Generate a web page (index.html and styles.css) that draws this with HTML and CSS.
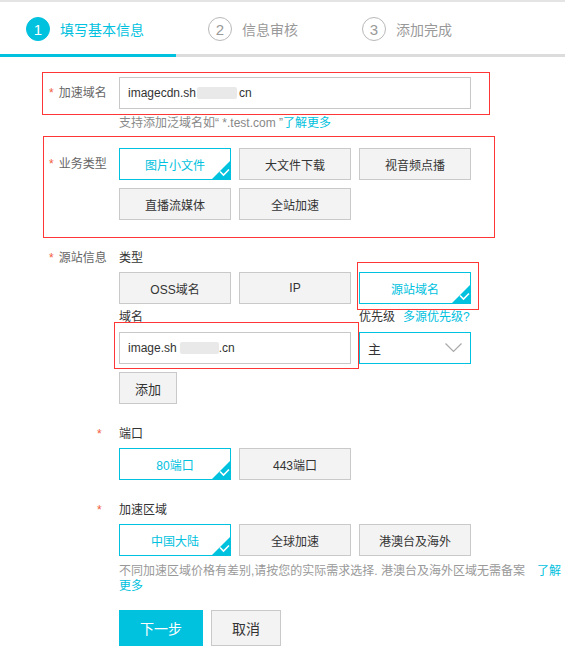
FILE: index.html
```html
<!DOCTYPE html>
<html lang="zh-CN">
<head>
<meta charset="utf-8">
<title>填写基本信息</title>
<link rel="stylesheet" href="styles.css">
</head>
<body>
<div class="page">
  <div class="steps">
    <div class="step active"><span class="num">1</span><span>填写基本信息</span></div>
    <div class="step"><span class="num">2</span><span>信息审核</span></div>
    <div class="step"><span class="num">3</span><span>添加完成</span></div>
  </div>
  <div class="progress"><div class="done"></div><div class="rest"></div></div>

  <div class="form">
    <div class="field">
      <div class="label"><span class="req">*</span>加速域名</div>
      <div class="content">
        <div class="input">imagecdn.sh<span class="blur b1"></span>cn</div>
        <div class="hint">支持添加泛域名如“ *.test.com ”<span class="link">了解更多</span></div>
      </div>
    </div>

    <div class="field f-type">
      <div class="label"><span class="req">*</span>业务类型</div>
      <div class="content">
        <div class="grid">
          <div class="opt on">图片小文件<svg class="tick" viewBox="0 0 20 20"><polygon points="20,0 20,20 0,20" fill="#00c1de"/><polyline points="9,11.5 12.5,15 18,9.5" fill="none" stroke="#fff" stroke-width="1.6"/></svg></div>
          <div class="opt">大文件下载</div>
          <div class="opt">视音频点播</div>
          <div class="opt">直播流媒体</div>
          <div class="opt">全站加速</div>
        </div>
      </div>
    </div>

    <div class="field f-origin">
      <div class="label sm"><span class="req">*</span>源站信息</div>
      <div class="content">
        <div class="sublabel">类型</div>
        <div class="grid">
          <div class="opt">OSS域名</div>
          <div class="opt">IP</div>
          <div class="opt on">源站域名<svg class="tick" viewBox="0 0 20 20"><polygon points="20,0 20,20 0,20" fill="#00c1de"/><polyline points="9,11.5 12.5,15 18,9.5" fill="none" stroke="#fff" stroke-width="1.6"/></svg></div>
        </div>
        <div class="pair pair-labels">
          <div class="sublabel">域名</div>
          <div class="sublabel">优先级<span class="link more">多源优先级?</span></div>
        </div>
        <div class="pair pair-inputs">
          <div class="input">image.sh<span class="blur b2"></span>.cn</div>
          <div class="select"><span>主</span><svg class="chev" viewBox="0 0 17 10"><polyline points="0.5,0.5 8.5,8.5 16.5,0.5" fill="none" stroke="#a9a9a9" stroke-width="1.2"/></svg></div>
        </div>
        <div class="opt btn-add">添加</div>
      </div>
    </div>

    <div class="field f-port">
      <div class="label sub"><span class="req">*</span></div>
      <div class="content">
        <div class="sublabel">端口</div>
        <div class="grid">
          <div class="opt on">80端口<svg class="tick" viewBox="0 0 20 20"><polygon points="20,0 20,20 0,20" fill="#00c1de"/><polyline points="9,11.5 12.5,15 18,9.5" fill="none" stroke="#fff" stroke-width="1.6"/></svg></div>
          <div class="opt">443端口</div>
        </div>
      </div>
    </div>

    <div class="field f-region">
      <div class="label sub"><span class="req">*</span></div>
      <div class="content">
        <div class="sublabel">加速区域</div>
        <div class="grid">
          <div class="opt on">中国大陆<svg class="tick" viewBox="0 0 20 20"><polygon points="20,0 20,20 0,20" fill="#00c1de"/><polyline points="9,11.5 12.5,15 18,9.5" fill="none" stroke="#fff" stroke-width="1.6"/></svg></div>
          <div class="opt">全球加速</div>
          <div class="opt">港澳台及海外</div>
        </div>
        <div class="hint hint2">不同加速区域价格有差别,请按您的实际需求选择. 港澳台及海外区域无需备案<span class="link learn">了解更多</span></div>
      </div>
    </div>

    <div class="actions">
      <div class="btn primary">下一步</div>
      <div class="btn cancel">取消</div>
    </div>
  </div>

  <div class="mark m1"></div>
  <div class="mark m2"></div>
  <div class="mark m3"></div>
  <div class="mark m4"></div>
</div>
</body>
</html>
```

FILE: styles.css
```css
body {
  margin: 0;
  background: #fff;
  font-family: "Liberation Sans", "Noto Sans CJK SC", sans-serif;
  font-size: 12px;
  color: #333;
}

.page {
  position: relative;
  width: 565px;
  height: 654px;
  overflow: hidden;
}

/* steps */
.steps {
  display: flex;
  align-items: center;
  gap: 64px;
  height: 50px;
  padding: 2px 0 0 26px;
  border-top: 2px solid #e4e4e4;
}

.step {
  display: flex;
  align-items: center;
  gap: 10px;
  font-size: 14px;
  color: #999;
}

.num {
  width: 24px;
  height: 24px;
  box-sizing: border-box;
  border-radius: 50%;
  border: 1px solid #b8b8b8;
  display: flex;
  align-items: center;
  justify-content: center;
  font-size: 15px;
  color: #999;
}

.step.active {
  color: #00c1de;
}

.step.active .num {
  background: #00c1de;
  border-color: #00c1de;
  color: #fff;
}

.progress {
  display: flex;
  height: 3px;
}

.progress .done {
  width: 176px;
  background: #00c1de;
}

.progress .rest {
  flex: 1;
  background: #dcdcdc;
}

/* form */
.form {
  padding-top: 20px;
}

.field {
  display: flex;
}

.label {
  flex: none;
  width: 119px;
  box-sizing: border-box;
  padding-left: 49px;
  line-height: 32px;
  color: #666;
  white-space: nowrap;
}

.label.sm {
  line-height: 16px;
}

.label.sub {
  padding-left: 97px;
  line-height: 16px;
}

.req {
  color: #f25c3c;
  margin-right: 5px;
}

.content {
  flex: 1;
  min-width: 0;
}

.input {
  width: 352px;
  height: 32px;
  box-sizing: border-box;
  border: 1px solid #c8c8c8;
  padding-left: 8px;
  display: flex;
  align-items: center;
  color: #333;
  background: #fff;
}

.blur {
  display: inline-block;
  height: 12px;
  background: #e9e9e9;
  border-radius: 2px;
  filter: blur(0.7px);
}

.b1 {
  width: 40px;
  margin: 0 2px 0 1px;
}

.b2 {
  width: 39px;
  margin: 0 0 0 3px;
}

.hint {
  margin-top: 6px;
  line-height: 16px;
  color: #888;
}

.link {
  color: #00c1de;
}

.f-type {
  margin-top: 17px;
}

.grid {
  display: grid;
  grid-template-columns: repeat(3, 112px);
  gap: 8px;
}

.opt {
  position: relative;
  height: 32px;
  box-sizing: border-box;
  border: 1px solid #c9c9c9;
  background: #f3f3f3;
  display: flex;
  align-items: center;
  justify-content: center;
  color: #333;
}

.opt.on {
  background: #fff;
  border-color: #00c1de;
  color: #00c1de;
}

.tick {
  position: absolute;
  right: -1px;
  bottom: -1px;
  width: 20px;
  height: 20px;
  display: block;
}

.f-origin {
  margin-top: 30px;
}

.sublabel {
  line-height: 16px;
  color: #333;
  margin-bottom: 6px;
}

.pair {
  display: grid;
  grid-template-columns: 232px 112px;
  column-gap: 8px;
}

.pair-labels {
  margin-top: 5px;
}

.pair-labels .sublabel {
  margin-bottom: 0;
  white-space: nowrap;
}

.more {
  margin-left: 8px;
}

.pair-inputs {
  margin-top: 7px;
}

.pair-inputs .input {
  width: 232px;
}

.select {
  height: 32px;
  box-sizing: border-box;
  border: 1px solid #00c1de;
  display: flex;
  align-items: center;
  justify-content: space-between;
  padding: 0 8px 0 8px;
  color: #333;
  font-size: 13px;
}

.chev {
  width: 17px;
  height: 10px;
  display: block;
}

.btn-add {
  width: 58px;
  margin-top: 8px;
  font-size: 13px;
}

.f-port,
.f-region {
  margin-top: 22px;
}

.hint2 {
  margin-top: 8px;
  line-height: 15px;
  width: 444px;
  color: #999;
}

.learn {
  margin-left: 12px;
}

.actions {
  display: flex;
  gap: 8px;
  margin-top: 16px;
  padding-left: 119px;
}

.btn {
  height: 36px;
  box-sizing: border-box;
  display: flex;
  align-items: center;
  justify-content: center;
  font-size: 14px;
}

.btn.primary {
  width: 84px;
  background: #00c1de;
  color: #fff;
}

.btn.cancel {
  width: 70px;
  background: #f3f3f3;
  border: 1px solid #c9c9c9;
  color: #333;
}

/* red annotation boxes */
.mark {
  position: absolute;
  box-sizing: border-box;
  border: 1px solid #ff3636;
  pointer-events: none;
}

.m1 { left: 42px; top: 72px; width: 448px; height: 43px; }
.m2 { left: 43px; top: 136px; width: 452px; height: 102px; }
.m3 { left: 357px; top: 262px; width: 122px; height: 48px; }
.m4 { left: 114px; top: 322px; width: 245px; height: 47px; }
```
